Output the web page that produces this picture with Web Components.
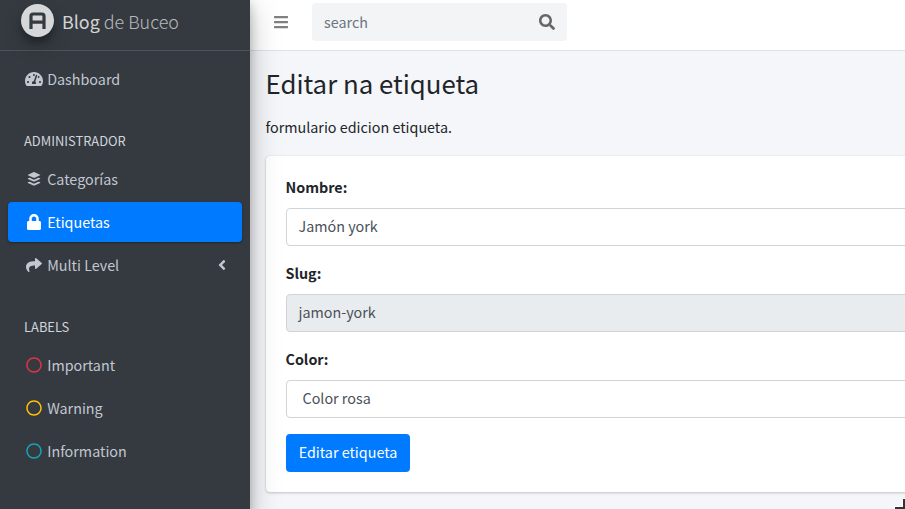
<!DOCTYPE html>
<html lang="es">
<head>
<meta charset="utf-8">
<title>Blog de Buceo</title>
<style>
html,body{margin:0;height:100%;overflow:hidden}
body{font-family:"Noto Sans CJK JP","Noto Sans CJK SC","Noto Sans",sans-serif;font-size:14.33px;line-height:24px;color:#212529;background:#f4f6f9}
</style>
</head>
<body>
<admin-app>
  <side-bar slot="side">
    <nav-item icon="gauge">Dashboard</nav-item>
    <nav-heading>ADMINISTRADOR</nav-heading>
    <nav-item icon="layers">Categorías</nav-item>
    <nav-item icon="lock" active>Etiquetas</nav-item>
    <nav-item icon="share" expandable>Multi Level</nav-item>
    <nav-heading>LABELS</nav-heading>
    <nav-item icon="circle" style="--icon:#dc3545">Important</nav-item>
    <nav-item icon="circle" style="--icon:#ffc107">Warning</nav-item>
    <nav-item icon="circle" style="--icon:#17a2b8">Information</nav-item>
  </side-bar>
  <top-bar></top-bar>
  <page-heading>Editar na etiqueta<span slot="lead">formulario edicion etiqueta.</span></page-heading>
  <form-card>
    <form-field label="Nombre:">Jamón york</form-field>
    <form-field label="Slug:" readonly>jamon-york</form-field>
    <form-field label="Color:" select>Color rosa</form-field>
    <submit-button>Editar etiqueta</submit-button>
  </form-card>
</admin-app>
<corner-mark></corner-mark>
<script>
const ICONS={
gauge:[576,512,'<path d="M288 32C128.94 32 0 160.94 0 320c0 52.8 14.25 102.26 39.06 144.8 5.61 9.62 16.3 15.2 27.44 15.2h443c11.14 0 21.83-5.58 27.44-15.2C561.75 422.26 576 372.8 576 320c0-159.06-128.94-288-288-288zm0 64c14.71 0 26.58 10.13 30.32 23.65-1.11 2.26-2.64 4.23-3.45 6.67l-9.22 27.67c-5.13 3.49-10.97 6.01-17.64 6.01-17.67 0-32-14.33-32-32S270.33 96 288 96zM96 384c-17.67 0-32-14.33-32-32s14.33-32 32-32 32 14.33 32 32-14.33 32-32 32zm48-160c-17.67 0-32-14.33-32-32s14.33-32 32-32 32 14.33 32 32-14.33 32-32 32zm246.77-72.41l-61.33 184C343.13 347.33 352 364.54 352 384c0 11.72-3.38 22.55-8.88 32H232.88c-5.5-9.45-8.88-20.28-8.88-32 0-33.94 26.5-61.43 59.9-63.59l61.34-184.01c4.17-12.56 17.73-19.45 30.36-15.17 12.57 4.19 19.35 17.79 15.17 30.36zm14.66 57.2l15.52-46.55c3.47-1.29 7.13-2.23 11.05-2.23 17.67 0 32 14.33 32 32s-14.33 32-32 32c-11.38-.01-20.89-6.28-26.57-15.22zM480 384c-17.67 0-32-14.33-32-32s14.33-32 32-32 32 14.33 32 32-14.33 32-32 32z"/>'],
layers:[448,512,'<path d="M224 32q12 0 22 5l172 80q18 9 0 18l-172 80q-22 9-44 0L30 135q-18-9 0-18l172-80q10-5 22-5zM30 237l38-18q10-4 20 0l114 54q22 9 44 0l114-54q10-4 20 0l38 18q18 9 0 18l-172 80q-22 9-44 0L30 255q-18-9 0-18zM30 362l38-18q10-4 20 0l114 54q22 9 44 0l114-54q10-4 20 0l38 18q18 9 0 18l-172 80q-22 9-44 0L30 380q-18-9 0-18z"/>'],
lock:[448,512,'<path d="M400 224h-24v-72C376 68.2 307.8 0 224 0S72 68.2 72 152v72H48c-26.5 0-48 21.5-48 48v192c0 26.5 21.5 48 48 48h352c26.5 0 48-21.5 48-48V272c0-26.5-21.5-48-48-48zm-104 0H152v-72c0-39.7 32.3-72 72-72s72 32.3 72 72v72z"/>'],
share:[512,512,'<path d="M503.691 189.836L327.687 37.851C312.281 24.546 288 35.347 288 56.015v80.053C127.371 137.907 0 170.1 0 322.326c0 61.441 39.581 122.309 83.333 154.132 13.653 9.931 33.111-2.533 28.077-18.631C66.066 312.814 132.917 274.316 288 272.085V360c0 20.7 24.3 31.453 39.687 18.164l176.004-152c11.071-9.562 11.086-26.753 0-36.328z"/>'],
circle:[512,512,'<path d="M256 8C119 8 8 119 8 256s111 248 248 248 248-111 248-248S393 8 256 8zm0 448c-110.500 0-200-89.500-200-200S145.500 56 256 56s200 89.500 200 200-89.500 200-200 200z"/>'],
angle:[256,512,'<path d="M31.700 239l136-136c9.400-9.400 24.600-9.400 33.900 0l22.600 22.600c9.400 9.400 9.400 24.600 0 33.900L127.900 256l96.400 96.400c9.400 9.400 9.400 24.600 0 33.900L201.700 409c-9.400 9.400-24.600 9.400-33.900 0l-136-136c-9.500-9.400-9.500-24.600-.1-34z"/>'],
bars:[448,512,'<path d="M16 132h416c8.800 0 16-7.200 16-16V76c0-8.800-7.200-16-16-16H16C7.200 60 0 67.200 0 76v40c0 8.800 7.200 16 16 16zm0 160h416c8.800 0 16-7.200 16-16v-40c0-8.800-7.200-16-16-16H16c-8.800 0-16 7.200-16 16v40c0 8.800 7.200 16 16 16zm0 160h416c8.800 0 16-7.200 16-16v-40c0-8.800-7.200-16-16-16H16c-8.800 0-16 7.200-16 16v40c0 8.800 7.200 16 16 16z"/>'],
search:[512,512,'<path d="M505 442.700L405.300 343c-4.500-4.500-10.600-7-17-7H372c27.600-35.300 44-79.700 44-128C416 93.100 322.900 0 208 0S0 93.100 0 208s93.100 208 208 208c48.300 0 92.700-16.400 128-44v16.300c0 6.400 2.500 12.500 7 17l99.700 99.700c9.400 9.400 24.600 9.400 33.900 0l28.300-28.300c9.400-9.400 9.400-24.600.1-34zM208 336c-70.700 0-128-57.200-128-128 0-70.700 57.200-128 128-128 70.700 0 128 57.200 128 128 0 70.700-57.200 128-128 128z"/>']};
const svg=n=>{const[w,h,p]=ICONS[n];return `<svg viewBox="0 0 ${w} ${h}" width="${w/32}" height="16" fill="currentColor">${p}</svg>`};
const define=(name,render)=>customElements.define(name,class extends HTMLElement{
  constructor(){super();this.attachShadow({mode:'open'})}
  connectedCallback(){this.shadowRoot.innerHTML='<style>:host,*{box-sizing:border-box}svg{display:block;flex:none}</style>'+render(this)}
});
define('admin-app',()=>`<style>
:host{display:grid;grid-template-columns:250px 1fr;height:515px;margin-top:-6px;overflow:hidden}
.side{z-index:2;display:grid}
main{min-width:0}
</style><div class="side"><slot name="side"></slot></div><main><slot></slot></main>`);
define('side-bar',()=>`<style>
:host{display:block;background:#343a40;color:#c2c7d0;box-shadow:0 14px 28px rgba(0,0,0,.25),0 10px 10px rgba(0,0,0,.22)}
header{display:flex;align-items:center;height:57px;padding:0 0 3px 21px;gap:8px;border-bottom:1px solid #4b545c;color:rgba(255,255,255,.8);font-size:17.9px;line-height:30px}
.logo{width:33px;height:33px;border-radius:50%;background:#d6d7d9;box-shadow:0 10px 20px rgba(0,0,0,.19),0 6px 6px rgba(0,0,0,.23)}
b{font-weight:400;font-family:"Noto Sans CJK JP",sans-serif}
.name{white-space:pre;font-weight:300;font-family:"Noto Sans CJK JP Light","Noto Sans CJK JP",sans-serif}
.thin{opacity:.82}
nav{display:flex;flex-direction:column;gap:3px;padding:8px}
</style><header><div class="logo"><svg viewBox="0 0 33 33" width="33" height="33"><path d="M10 25V12q0-2 2-2h9q2 0 2 2V25M10 18.200h13" fill="none" stroke="#343a40" stroke-width="3.200"/></svg></div><div class="name"><b>Blog</b><span class="thin"> de Buceo</span></div></header><nav><slot></slot></nav>`);
define('nav-heading',()=>`<style>:host{display:block;height:54px;padding:28px 16px 0;font-size:12.900px;line-height:21px;color:#d0d4db}</style><slot></slot>`);
define('nav-item',e=>`<style>
:host{display:flex;align-items:center;height:40px;padding:0 16px;border-radius:4px}
:host([active]){background:#007bff;color:#fff;box-shadow:0 1px 3px rgba(0,0,0,.12),0 1px 2px rgba(0,0,0,.24)}
i{display:flex;justify-content:center;width:20px;margin-right:3.200px;color:var(--icon,inherit)}
.text{flex:1}
</style><i>${svg(e.getAttribute('icon'))}</i><div class="text"><slot></slot></div>${e.hasAttribute('expandable')?svg('angle'):''}`);
define('top-bar',()=>`<style>
:host{display:flex;align-items:center;height:57px;padding:0 0 0 24px;background:#fff;border-bottom:1px solid #dee2e6;color:#808080}
.search{display:flex;align-items:center;justify-content:space-between;width:255px;height:38px;margin-left:24px;padding:0 12px;border-radius:4px;background:#f2f4f6;color:#6c757d}
.search svg{color:#666}
</style>${svg('bars')}<div class="search"><span>search</span>${svg('search')}</div>`);
define('page-heading',()=>`<style>
:host{display:block;padding:13px 15.500px 0}
h1{margin:0;font-size:25.800px;line-height:37px;font-weight:400}
p{margin:14px 0 17px}
</style><h1><slot></slot></h1><p><slot name="lead"></slot></p>`);
define('form-card',()=>`<style>
:host{display:block;margin-left:16px;margin-right:-50px;padding:20px;height:336px;background:#fff;border-radius:4px;box-shadow:0 0 1px rgba(0,0,0,.125),0 1px 3px rgba(0,0,0,.2)}
</style><slot></slot>`);
define('form-field',e=>`<style>
:host{display:block;margin-bottom:16px}
label{display:block;height:32px;margin-left:-.5px;font-weight:700;line-height:22px}
.box{height:38px;padding:5px 11.500px;border:1px solid #ced4da;border-radius:4px;background:#fff;color:#495057}
:host([readonly]) .box{background:#e9ecef}
:host([select]) .box{padding-left:15.500px}
</style><label>${e.getAttribute('label')}</label><div class="box"><slot></slot></div>`);
define('submit-button',()=>`<style>
:host{display:block;width:124px;height:38px;padding:6px 0;text-align:center;border-radius:4px;background:#007bff;color:#fff}
</style><slot></slot>`);
define('corner-mark',()=>`<style>
:host{position:fixed;right:0;bottom:0;z-index:3;display:block}
</style><svg width="12" height="12" viewBox="0 0 12 12"><path d="M1 9h8V1h3v11H1z" fill="#fff"/><path d="M2 10h8V2h2v10H2z" fill="#333"/></svg>`);
</script>
</body>
</html>
